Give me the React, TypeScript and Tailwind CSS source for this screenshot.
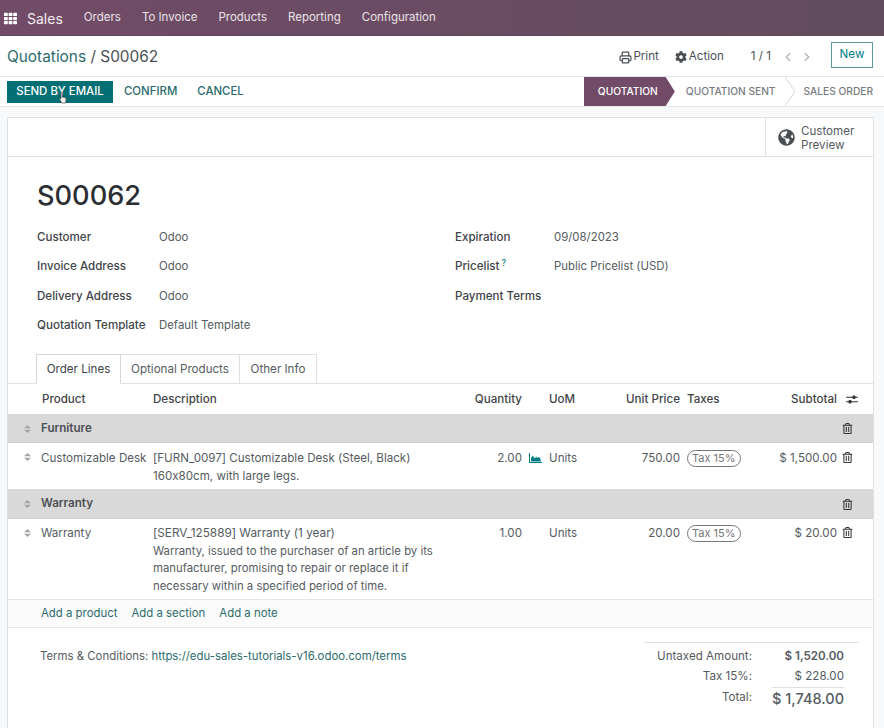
import { ChevronLeft, ChevronRight, Printer } from "lucide-react";
import { FaCog, FaGlobeAmericas, FaRegTrashAlt, FaTh } from "react-icons/fa";

const menu = ["Orders", "To Invoice", "Products", "Reporting", "Configuration"];
const rowGrid = "grid grid-cols-[33px_112px_312px_57px_27px_50px_81px_7px_70px_80px_35px]";

function Handle({ className = "" }: { className?: string }) {
  return (
    <svg viewBox="0 0 7 8" className={`ml-[16px] h-[8px] w-[7px] text-[#a3a5a8] ${className}`} fill="currentColor">
      <path d="M3.5 0 7 3.2H0zM3.5 8 0 4.8h7z" />
    </svg>
  );
}

function Trash({ className = "" }: { className?: string }) {
  return <FaRegTrashAlt size={11} className={`ml-[5px] text-[#333] ${className}`} />;
}

function Field({ label, value, width }: { label: string; value?: string; width: string }) {
  return (
    <div className="flex h-[29.5px] items-center pt-[1px]">
      <div className={`${width} font-medium text-[#3f4449]`}>{label}</div>
      <div className="text-[11.4px] text-[#555b61]">{value}</div>
    </div>
  );
}

function Section({ name, height }: { name: string; height: string }) {
  return (
    <div className={`${rowGrid} ${height} items-center border-b border-[#cfcfcf] bg-[#d9d9d9] pt-[1px]`}>
      <Handle />
      <div className="font-semibold text-[#4a4f54]">{name}</div>
      <div className="col-start-11"><Trash /></div>
    </div>
  );
}

function TaxBadge() {
  return <span className="mt-[1px] inline-block rounded-full border border-[#777] px-[4px] text-[11px] leading-[15px] text-[#777]">Tax 15%</span>;
}

export default function App() {
  return (
    <div className="h-[728px] w-[884px] overflow-hidden bg-[#f8f9fa] font-['Inter','Liberation_Sans',sans-serif] text-[11.6px] text-[#555b61] [font-feature-settings:'calt'_0]">
      <div className="flex h-[36px] items-center border-b border-[#5d4a58] bg-gradient-to-r from-[#714b67] to-[#634c5f] pt-[1px] text-white/85">
        <FaTh size={13} className="ml-[4px] text-white" />
        <span className="ml-[10px] text-[14px] text-white/90">Sales</span>
        <div className="ml-[21px] flex gap-[21px] text-[11.5px]">
          {menu.map((item) => (
            <span key={item}>{item}</span>
          ))}
        </div>
      </div>

      <div className="flex h-[40px] items-center bg-white pl-[7px] pr-[11px] pt-[2px]">
        <div className="text-[15.4px]">
          <span className="text-[#2c6b6d]">Quotations</span>
          <span className="text-[#4a4f54]"> / S00062</span>
        </div>
        <div className="ml-auto flex items-center text-[#4a4f54]">
          <Printer size={13} strokeWidth={2.2} className="mr-[1px]" />
          <span>Print</span>
          <FaCog size={12} className="ml-[16px] mr-[2px]" />
          <span>Action</span>
          <span className="ml-[27px]">1 / 1</span>
          <ChevronLeft size={14} strokeWidth={2.5} className="ml-[10px] text-[#b5b8bb]" />
          <ChevronRight size={14} strokeWidth={2.5} className="ml-[5px] text-[#b5b8bb]" />
          <span className="ml-[17px] -mt-[4px] flex h-[26px] w-[42px] items-center justify-center border border-[#5f9a9c] text-[#017e84]">New</span>
        </div>
      </div>

      <div className="flex h-[31px] items-stretch border-y border-[#e4e5e7] bg-white">
        <div className="flex items-center pl-[7px] text-[11.4px] font-medium">
          <span className="relative flex h-[22px] w-[106px] items-center justify-center bg-[#016f74] text-white">
            SEND BY EMAIL
            <svg viewBox="0 0 8 12" className="absolute left-[52px] top-[11px] h-[12px] w-[8px]" fill="#f4f1ee" stroke="#333" strokeWidth="0.6">
              <path d="M2 1.2c0-.9 1.3-.9 1.3 0V5l2.6.6c.8.2 1.4.8 1.2 1.7L6.6 11H2.8L.7 7.6c-.4-.8.5-1.4 1.3-.8z" />
            </svg>
          </span>
          <span className="ml-[11px] text-[#2c6b6d]">CONFIRM</span>
          <span className="ml-[20px] text-[#2c6b6d]">CANCEL</span>
        </div>
        <div className="ml-auto flex items-center text-[10.2px] font-medium">
          <div className="flex h-full w-[91px] items-center bg-[#714b67] pl-[14px] text-white [clip-path:polygon(0_0,90%_0,100%_50%,90%_100%,0_100%)]">QUOTATION</div>
          <div className="ml-[11px] text-[#777b80]">QUOTATION SENT</div>
          <svg viewBox="0 0 10 29" className="ml-[9px] h-full w-[10px] text-[#d5d6d8]" fill="none" stroke="currentColor"><path d="M0 0 10 14.5 0 29" /></svg>
          <div className="ml-[9px] mr-[11px] text-[#777b80]">SALES ORDER</div>
        </div>
      </div>

      <div className="ml-[7px] mr-[10px] mt-[10px] border border-[#dfe0e2] bg-white">
        <div className="flex h-[39px] justify-end border-b border-[#dfe0e2]">
          <div className="flex w-[108px] items-center border-l border-[#dfe0e2] pl-[12px] pt-[1px] leading-[14px]">
            <FaGlobeAmericas size={17} className="mr-[6px] text-[#4a4f54]" />
            <span>Customer<br />Preview</span>
          </div>
        </div>

        <div className="px-[29px] pt-[21px]">
          <h1 className="text-[27.2px] font-medium leading-[36px] text-[#2b2f33]">S00062</h1>
          <div className="mt-[8px] flex">
            <div className="w-[418px]">
              <Field width="w-[122px]" label="Customer" value="Odoo" />
              <Field width="w-[122px]" label="Invoice Address" value="Odoo" />
              <Field width="w-[122px]" label="Delivery Address" value="Odoo" />
              <Field width="w-[122px]" label="Quotation Template" value="Default Template" />
            </div>
            <div>
              <Field width="w-[99px]" label="Expiration" value="09/08/2023" />
              <div className="flex h-[29.5px] items-center pt-[1px]"><div className="w-[99px] font-medium text-[#3f4449]">Pricelist<sup className="ml-[2px] text-[#017e84]">?</sup></div><div className="text-[11.4px]">Public Pricelist (USD)</div></div>
              <Field width="w-[99px]" label="Payment Terms" />
            </div>
          </div>
        </div>

        <div className="mt-[14px] flex h-[30px] border-b border-[#dfe0e2] pl-[28px]">
          <div className="flex h-[30px] w-[85px] items-center justify-center border border-[#d5d6d8] border-b-white bg-white pt-[1px] text-[#3f4449]">Order Lines</div>
          <div className="flex h-[30px] w-[119px] items-center justify-center border-y border-r border-[#dfe0e2] pt-[1px]">Optional Products</div>
          <div className="flex h-[30px] w-[77px] items-center justify-center border-y border-r border-[#dfe0e2] pt-[1px]">Other Info</div>
        </div>

        <div className={`${rowGrid} h-[30px] items-center pt-[1px] font-medium text-[#3f4449]`}>
          <div className="col-start-2 pl-[1px]">Product</div>
          <div>Description</div>
          <div className="whitespace-nowrap text-right">Quantity</div>
          <div className="col-start-6">UoM</div>
          <div className="whitespace-nowrap text-right">Unit Price</div>
          <div className="col-start-9">Taxes</div>
          <div className="text-right">Subtotal</div>
          <svg viewBox="0 0 12 9" className="ml-[9px] h-[9px] w-[12px] text-[#333]" fill="currentColor">
            <path d="M0 1.8h12v1H0zM0 6.2h12v1H0z" />
            <rect x="6.5" y="0.5" width="3" height="3.5" rx="1" />
            <rect x="2.5" y="5" width="3" height="3.5" rx="1" />
          </svg>
        </div>

        <Section name="Furniture" height="h-[29px]" />
        <div className={`${rowGrid} h-[46px] pt-[6px] leading-[18px]`}>
          <Handle className="mt-[4px]" />
          <div className="whitespace-nowrap">Customizable Desk</div>
          <div>[FURN_0097] Customizable Desk (Steel, Black)<br />160x80cm, with large legs.</div>
          <div className="text-right">2.00</div>
          <svg viewBox="0 0 13 10" className="ml-[7px] mt-[4px] h-[10px] w-[13px] text-[#017e84]" fill="currentColor">
            <path d="M0 0h1v9h12v1H0zM2 8.5V5.5L3.5 2.5 5 4.5 6 5.5 7 3.5 8.5 5 9.5 4l1.5 1 1 3.5z" />
          </svg>
          <div>Units</div>
          <div className="text-right">750.00</div>
          <div className="col-start-9"><TaxBadge /></div>
          <div className="whitespace-nowrap text-right">$ 1,500.00</div>
          <Trash className="mt-[3px]" />
        </div>

        <Section name="Warranty" height="h-[30px]" />
        <div className={`${rowGrid} h-[80px] pt-[5px] leading-[17.5px]`}>
          <Handle className="mt-[5px]" />
          <div className="pt-[1px]">Warranty</div>
          <div className="pt-[1px] pr-[15px]">
            <div className="text-[11.8px]">[SERV_125889] Warranty (1 year)</div>
            <div className="text-[11.35px]">Warranty, issued to the purchaser of an article by its manufacturer, promising to repair or replace it if necessary within a specified period of time.</div>
          </div>
          <div className="pt-[1px] text-right">1.00</div>
          <div className="col-start-6 pt-[1px]">Units</div>
          <div className="pt-[1px] text-right">20.00</div>
          <div className="col-start-9"><TaxBadge /></div>
          <div className="pt-[1px] text-right">$ 20.00</div>
          <Trash className="mt-[3px]" />
        </div>

        <div className="flex h-[29px] items-center gap-[14px] border-y border-[#e4e5e7] bg-[#fbfbfb] pl-[33px] pt-[1px] text-[11.4px] text-[#2c6b6d]">
          <span>Add a product</span>
          <span>Add a section</span>
          <span>Add a note</span>
        </div>

        <div className="flex min-h-[120px] justify-between pl-[32px] pr-[14px] pt-[14px]">
          <div className="mt-[6px] text-[11.4px]">Terms &amp; Conditions: <span className="text-[#2c6b6d]">https://edu-sales-tutorials-v16.odoo.com/terms</span></div>
          <div className="h-[70px] w-[215px] border-t border-[#dfe0e2] pt-[4px]">
            <div className="flex h-[20px] items-center"><div className="w-[108px] text-right">Untaxed Amount:</div><div className="flex-1 pr-[15px] text-right font-semibold">$ 1,520.00</div></div>
            <div className="flex h-[20px] items-center"><div className="w-[108px] text-right">Tax 15%:</div><div className="flex-1 pr-[15px] text-right">$ 228.00</div></div>
            <div className="flex h-[22px] items-center"><div className="w-[108px] text-right">Total:</div><div className="ml-[20px] mr-[15px] flex-1 whitespace-nowrap border-t border-[#dfe0e2] text-right text-[14.5px] font-medium">$ 1,748.00</div></div>
          </div>
        </div>
      </div>
    </div>
  );
}
